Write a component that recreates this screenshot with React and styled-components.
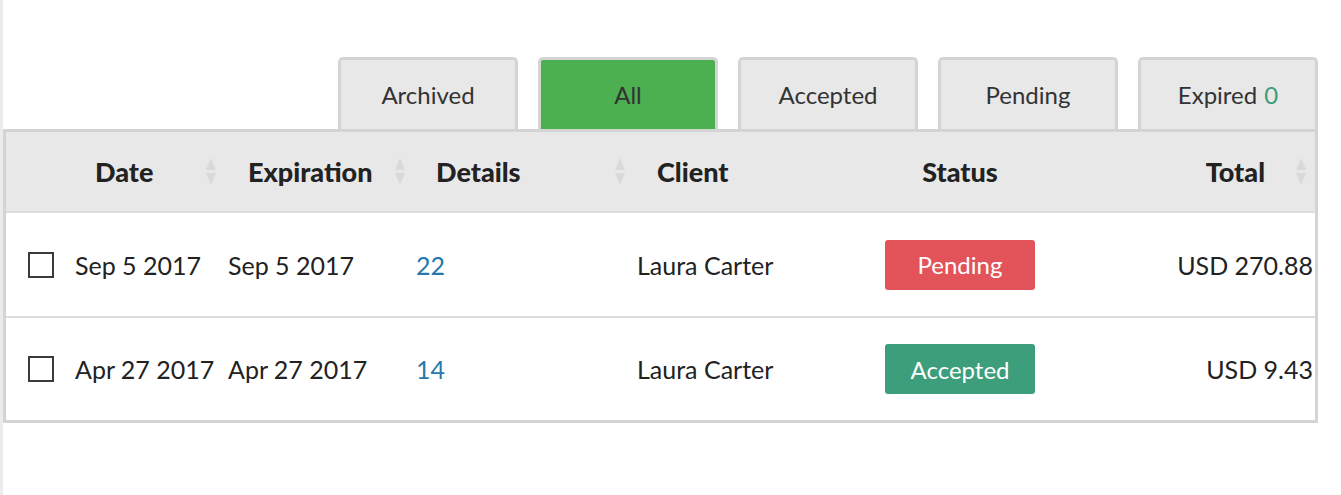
import React from 'react';
import styled, { createGlobalStyle } from 'styled-components';

const GlobalStyle = createGlobalStyle`
  html, body {
    margin: 0;
    padding: 0;
    background: #fff;
  }
  body {
    font-family: Lato, "Open Sans", sans-serif;
    color: #222;
  }
`;

const Page = styled.div`
  width: 1318px;
  min-height: 495px;
  border-left: 3px solid #ebebeb;
  padding-top: 57px;
  box-sizing: border-box;
`;

const Tabs = styled.div`
  display: flex;
  justify-content: flex-end;
  gap: 20px;
`;

const Tab = styled.div`
  width: 180px;
  height: 72px;
  box-sizing: border-box;
  border: 3px solid #d4d4d4;
  border-bottom: none;
  border-radius: 5px 5px 0 0;
  background: ${p => (p.active ? '#4caf50' : '#e8e8e8')};
  color: #333;
  font-size: 24px;
  display: flex;
  align-items: center;
  justify-content: center;
  padding-bottom: 0;
`;

const Count = styled.span`
  color: #3a9e7a;
  margin-left: 7px;
`;

const Table = styled.div`
  border: 3px solid #d4d4d4;
  background: #fff;
`;

const Row = styled.div`
  display: grid;
  grid-template-columns: 61px 153px 188px 221px 231px 200px 1fr;
  align-items: center;
  height: ${p => p.h}px;
  border-top: ${p => (p.first ? 'none' : '2px solid #dcdcdc')};
  box-sizing: border-box;
`;

const Head = styled(Row)`
  background: #e8e8e8;
  height: 79px;
`;

const Th = styled.div`
  position: relative;
  height: 100%;
  display: flex;
  align-items: center;
  justify-content: ${p => p.align || 'flex-start'};
  padding-left: ${p => (p.align ? 0 : 28)}px;
  padding-right: ${p => (p.align === 'flex-end' ? 50 : 0)}px;
  font-size: 27px;
  font-weight: 900;
  color: #222;
  white-space: nowrap;
`;

const SortIcon = styled.svg`
  position: absolute;
  right: ${p => p.r || 5}px;
  top: 50%;
  transform: translateY(-50%);
`;

const Td = styled.div`
  display: flex;
  align-items: center;
  justify-content: ${p => p.align || 'flex-start'};
  padding-left: ${p => (p.align ? 0 : 8)}px;
  padding-right: ${p => (p.align === 'flex-end' ? 2 : 0)}px;
  font-size: 25px;
  color: #222;
  white-space: nowrap;
`;

const CheckCell = styled.div`
  padding-left: 22px;
  display: flex;
  align-items: center;
`;

const Check = styled.span`
  display: inline-block;
  width: 26px;
  height: 26px;
  box-sizing: border-box;
  border: 2px solid #3a3a3a;
`;

const Link = styled.a`
  color: #2779ad;
  text-decoration: none;
`;

const Badge = styled.span`
  width: 150px;
  height: 50px;
  border-radius: 3px;
  background: ${p => (p.kind === 'Pending' ? '#e3535a' : '#3d9e7b')};
  color: #fff;
  font-size: 24px;
  display: flex;
  align-items: center;
  justify-content: center;
`;

const Sort = ({ r }) => (
  <SortIcon r={r} width="12" height="28" viewBox="0 0 12 28">
    <path d="M6 0 L11 12 L1 12 Z" fill="#d9d9d9" />
    <path d="M1 15 L11 15 L6 27 Z" fill="#d9d9d9" />
  </SortIcon>
);

const tabs = ['Archived', 'All', 'Accepted', 'Pending', 'Expired'];

const quotes = [
  { date: 'Sep 5 2017', exp: 'Sep 5 2017', details: '22', client: 'Laura Carter', status: 'Pending', total: 'USD 270.88', h: 105 },
  { date: 'Apr 27 2017', exp: 'Apr 27 2017', details: '14', client: 'Laura Carter', status: 'Accepted', total: 'USD 9.43', h: 104 },
];

export default function App() {
  return (
    <>
      <GlobalStyle />
      <Page>
        <Tabs>
          {tabs.map(t => (
            <Tab key={t} active={t === 'All'}>
              {t}
              {t === 'Expired' ? <Count>0</Count> : null}
            </Tab>
          ))}
        </Tabs>
        <Table>
          <Head first>
            <Th />
            <Th>Date<Sort r={3} /></Th>
            <Th>Expiration<Sort r={2} /></Th>
            <Th>Details<Sort r={3} /></Th>
            <Th>Client</Th>
            <Th align="center">Status</Th>
            <Th align="flex-end">Total<Sort r={8} /></Th>
          </Head>
          {quotes.map((q, i) => (
            <Row key={i} h={q.h}>
              <CheckCell><Check /></CheckCell>
              <Td>{q.date}</Td>
              <Td>{q.exp}</Td>
              <Td><Link href="#">{q.details}</Link></Td>
              <Td>{q.client}</Td>
              <Td align="center"><Badge kind={q.status}>{q.status}</Badge></Td>
              <Td align="flex-end">{q.total}</Td>
            </Row>
          ))}
        </Table>
      </Page>
    </>
  );
}
